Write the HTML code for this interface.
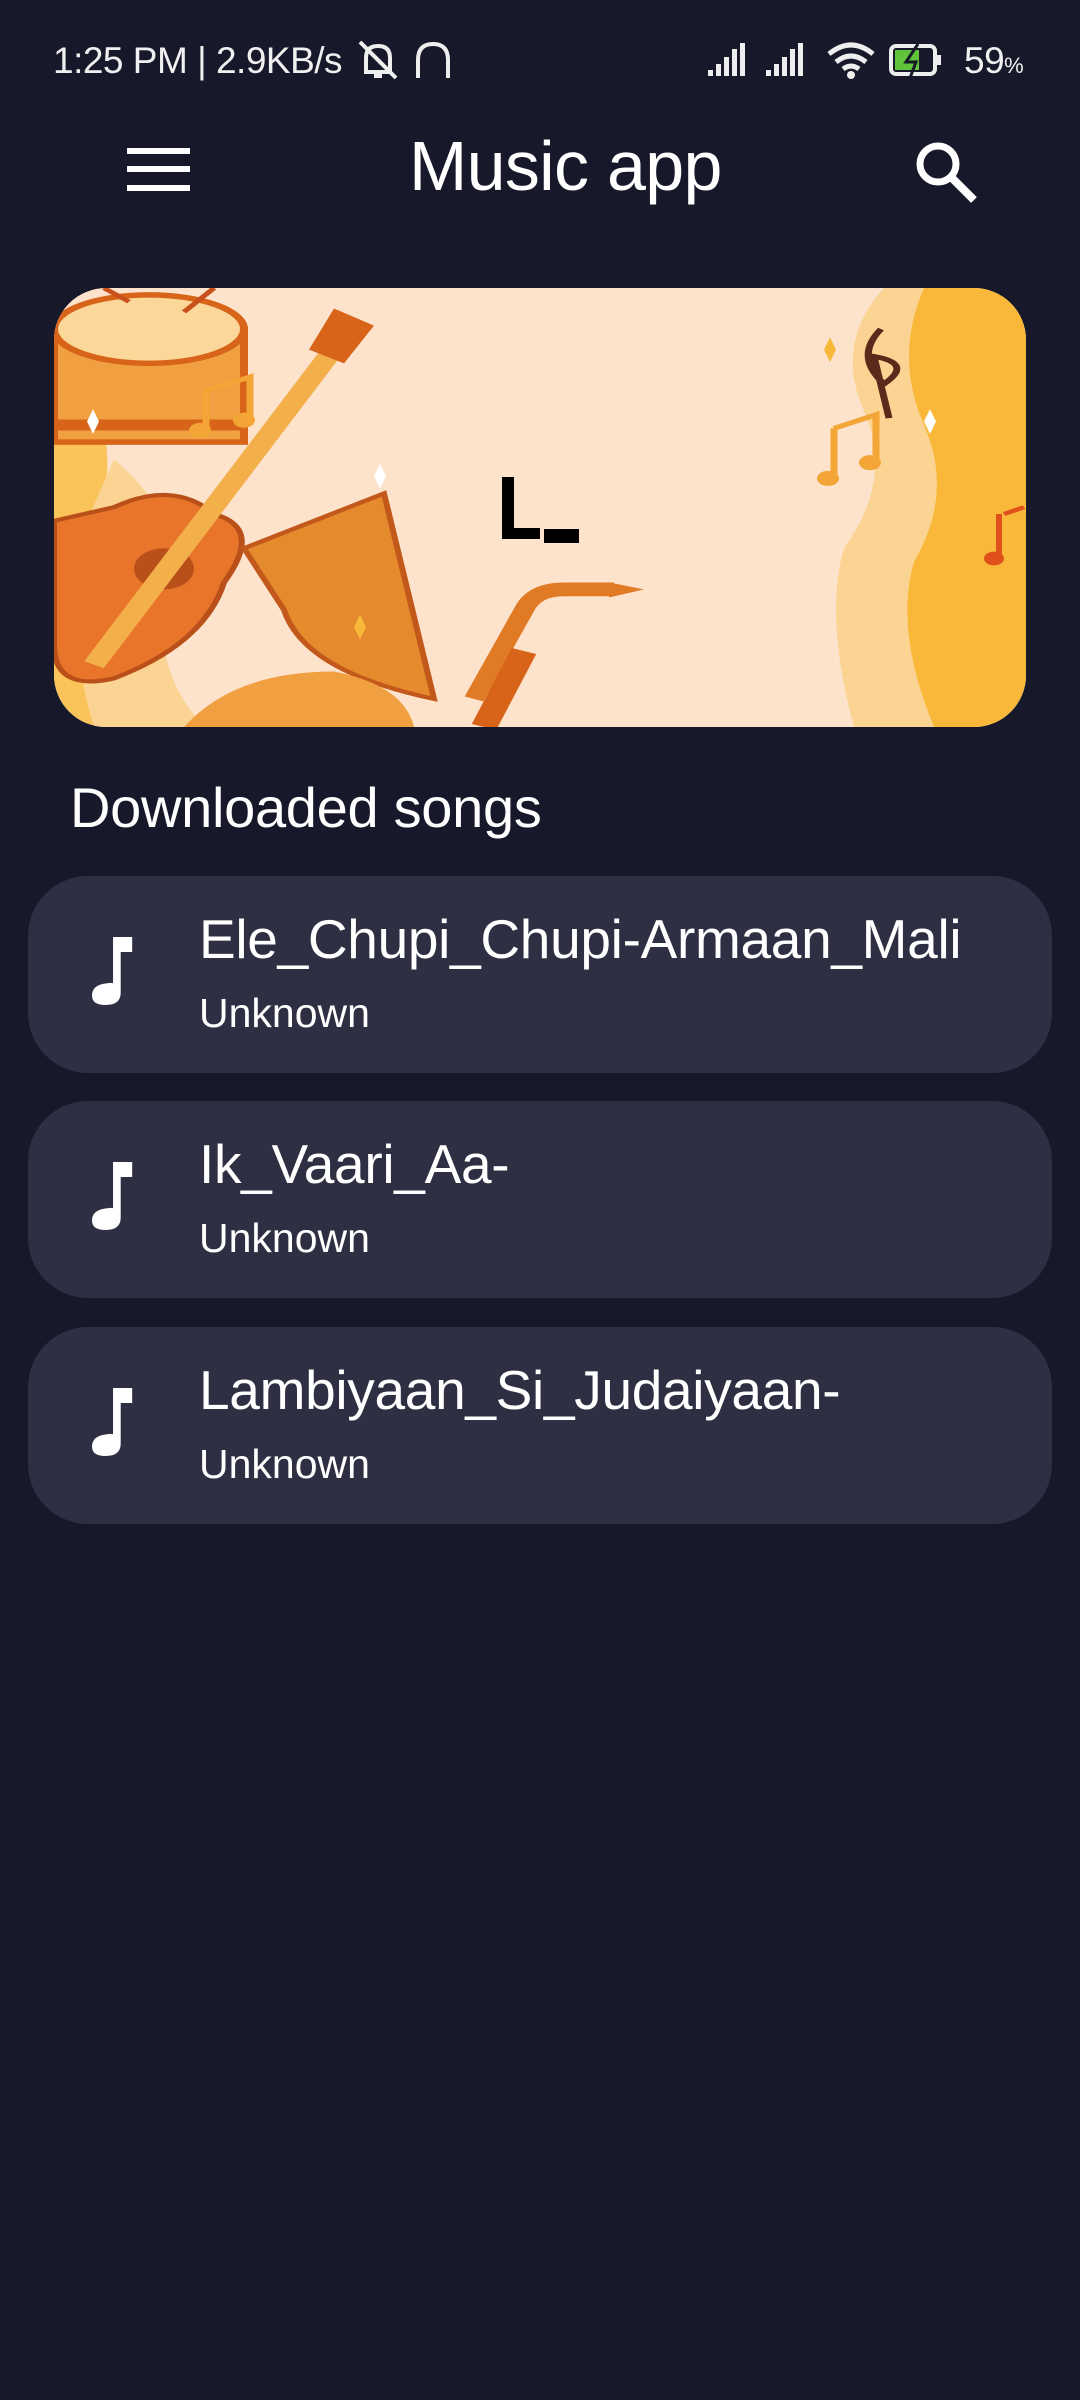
<!DOCTYPE html>
<html><head><meta charset="utf-8"><style>
*{margin:0;padding:0;box-sizing:border-box}
body{width:1080px;height:2400px;background:#171829;font-family:"Liberation Sans",sans-serif;color:#fff;position:relative;overflow:hidden}
.abs{position:absolute}
.sb{top:40px;font-size:37px;letter-spacing:-0.5px;color:#f0f0f0}
.card{position:absolute;left:28px;width:1024px;height:197px;background:#2e2f42;border-radius:60px}
.card .t{position:absolute;left:171px;top:31px;font-size:55px;font-weight:300;letter-spacing:-0.3px;white-space:nowrap}
.card .u{position:absolute;left:171px;top:114px;font-size:41px;font-weight:300}
.card svg{position:absolute;left:64px;top:61px}
</style></head><body>
<div class="abs sb" style="left:53px">1:25 PM | 2.9KB/s</div>
<svg class="abs" style="left:356px;top:38px" width="100" height="44" viewBox="0 0 100 44"><g fill="none" stroke="#eee" stroke-width="4"><path d="M10 34 L10 20 Q10 8 22 8 Q34 8 34 20 L34 34 Z M18 38 h8 M4 4 L40 40"/><path d="M62 40 V22 Q62 6 77 6 Q92 6 92 22 V40"/></g></svg>
<svg class="abs" style="left:706px;top:40px" width="320" height="40" viewBox="0 0 320 40"><g fill="#eee"><rect x="2" y="30" width="5" height="6"/><rect x="10" y="24" width="5" height="12"/><rect x="18" y="17" width="5" height="19"/><rect x="26" y="9" width="5" height="27"/><rect x="34" y="3" width="5" height="33"/><rect x="60" y="30" width="5" height="6"/><rect x="68" y="24" width="5" height="12"/><rect x="76" y="17" width="5" height="19"/><rect x="84" y="9" width="5" height="27"/><rect x="92" y="3" width="5" height="33"/></g><g fill="none" stroke="#eee" stroke-width="5"><path d="M123 14 Q145 -4 167 14 M130 22 Q145 10 160 22 M137 29 Q145 23 153 29"/></g><circle cx="145" cy="35" r="4" fill="#eee"/><rect x="185" y="6" width="44" height="28" rx="5" fill="none" stroke="#eee" stroke-width="4"/><rect x="189" y="10" width="24" height="20" fill="#5fc43a"/><rect x="231" y="15" width="4" height="10" fill="#eee"/><path d="M212 4 L200 22 H210 L204 38" stroke="#171829" stroke-width="3" fill="none"/></svg>
<div class="abs sb" style="left:964px">59<span style="font-size:22px">%</span></div>

<svg class="abs" style="left:127px;top:148px" width="63" height="43" viewBox="0 0 63 43"><g fill="#fff"><rect y="0" width="63" height="6"/><rect y="18" width="63" height="6"/><rect y="37" width="63" height="6"/></g></svg>
<div class="abs" style="left:409px;top:126px;font-size:70px;letter-spacing:-0.7px">Music app</div>
<svg class="abs" style="left:912px;top:138px" width="68" height="68" viewBox="0 0 68 68"><circle cx="26" cy="26" r="18" fill="none" stroke="#fff" stroke-width="7"/><path d="M39 39 L62 62" stroke="#fff" stroke-width="8"/></svg>

<div class="abs" style="left:54px;top:288px;width:972px;height:439px;border-radius:52px;overflow:hidden;background:#fde2cc">
<svg width="972" height="439" viewBox="0 0 972 641" preserveAspectRatio="none">
<path d="M830 0 Q780 80 810 180 Q840 280 790 380 Q770 480 800 641 H972 V0Z" fill="#fbd493"/>
<path d="M870 0 Q840 100 870 200 Q900 300 860 400 Q840 500 880 641 H972 V0Z" fill="#f9b83a"/>
<path d="M0 100 Q80 200 40 350 Q20 500 80 641 H0Z" fill="#fbc45a"/>
<path d="M60 250 Q140 350 110 460 Q100 560 150 641 H40 Q10 500 30 350Z" fill="#fbd493"/>
<rect x="0" y="60" width="190" height="165" fill="#f0a040" stroke="#d8641a" stroke-width="8"/>
<ellipse cx="95" cy="60" rx="95" ry="50" fill="#fbd79a" stroke="#d8641a" stroke-width="8"/>
<path d="M0 200 H190" stroke="#d8641a" stroke-width="16"/>
<path d="M50 0 L75 20 M160 0 L130 35" stroke="#c9501a" stroke-width="6"/>
<path d="M60 320 Q120 280 160 330 Q210 350 170 430 Q150 520 60 570 Q0 590 0 520 V340Z" fill="#e8752a" stroke="#b9501a" stroke-width="6"/>
<circle cx="110" cy="410" r="30" fill="#b9501a"/>
<path d="M40 550 L300 50" stroke="#f3b04a" stroke-width="22"/>
<path d="M280 30 L320 55 L290 110 L255 90Z" fill="#d8641a"/>
<path d="M190 380 L330 300 L380 600 Q250 560 230 470Z" fill="#e68a2e" stroke="#c2581a" stroke-width="6"/>
<path d="M130 641 Q180 560 280 560 Q350 580 360 641Z" fill="#f0a040"/>
<path d="M420 600 L470 470 Q480 440 510 440 L560 440" stroke="#e07a24" stroke-width="20" fill="none"/>
<path d="M430 641 L470 530" stroke="#d8641a" stroke-width="26"/>
<path d="M555 430 L590 440 L555 452Z" fill="#e07a24"/>
<g fill="#f3a535"><path d="M152 150 L196 130 L196 190 M152 150 V205" stroke="#f3a535" stroke-width="7" fill="none"/><circle cx="146" cy="208" r="11"/><circle cx="190" cy="193" r="11"/><path d="M780 205 L822 185 L822 250 M780 205 V275" stroke="#f3a535" stroke-width="7" fill="none"/><circle cx="774" cy="278" r="11"/><circle cx="816" cy="255" r="11"/></g>
<path d="M827 60 Q800 100 830 140 Q860 110 820 100 L835 190" stroke="#5a2a1a" stroke-width="7" fill="none"/>
<path d="M950 330 L970 320 M945 330 V395" stroke="#e0501a" stroke-width="6" fill="none"/><circle cx="940" cy="395" r="10" fill="#e0501a"/>
<g fill="#fff"><path d="M33 195 l6 -18 l6 18 l-6 18z"/><path d="M870 195 l6 -18 l6 18 l-6 18z"/></g>
<g fill="#f9b83a"><path d="M770 90 l6 -18 l6 18 l-6 18z"/><path d="M940 110 l6 -18 l6 18 l-6 18z"/><path d="M320 275 l6 -18 l6 18 l-6 18z" fill="#fff"/><path d="M300 495 l6 -18 l6 18 l-6 18z"/></g>
</svg>
<div class="abs" style="left:448px;top:189px;width:12px;height:62px;background:#000"></div>
<div class="abs" style="left:448px;top:240px;width:38px;height:11px;background:#000"></div>
<div class="abs" style="left:490px;top:241px;width:35px;height:14px;background:#000"></div>
</div>

<div class="abs" style="left:70px;top:775px;font-size:56px;letter-spacing:-0.3px">Downloaded songs</div>

<div class="card" style="top:876px"><svg width="44" height="68" viewBox="0 0 46 100" preserveAspectRatio="none"><path d="M22 0 H42 V22 H30 V82 Q30 100 14 100 Q0 100 0 86 Q0 70 16 68 Q20 67 22 68Z" fill="#fff"/></svg><div class="t">Ele_Chupi_Chupi-Armaan_Mali</div><div class="u">Unknown</div></div>
<div class="card" style="top:1101px"><svg width="44" height="68" viewBox="0 0 46 100" preserveAspectRatio="none"><path d="M22 0 H42 V22 H30 V82 Q30 100 14 100 Q0 100 0 86 Q0 70 16 68 Q20 67 22 68Z" fill="#fff"/></svg><div class="t">Ik_Vaari_Aa-</div><div class="u">Unknown</div></div>
<div class="card" style="top:1327px"><svg width="44" height="68" viewBox="0 0 46 100" preserveAspectRatio="none"><path d="M22 0 H42 V22 H30 V82 Q30 100 14 100 Q0 100 0 86 Q0 70 16 68 Q20 67 22 68Z" fill="#fff"/></svg><div class="t">Lambiyaan_Si_Judaiyaan-</div><div class="u">Unknown</div></div>
</body></html>
